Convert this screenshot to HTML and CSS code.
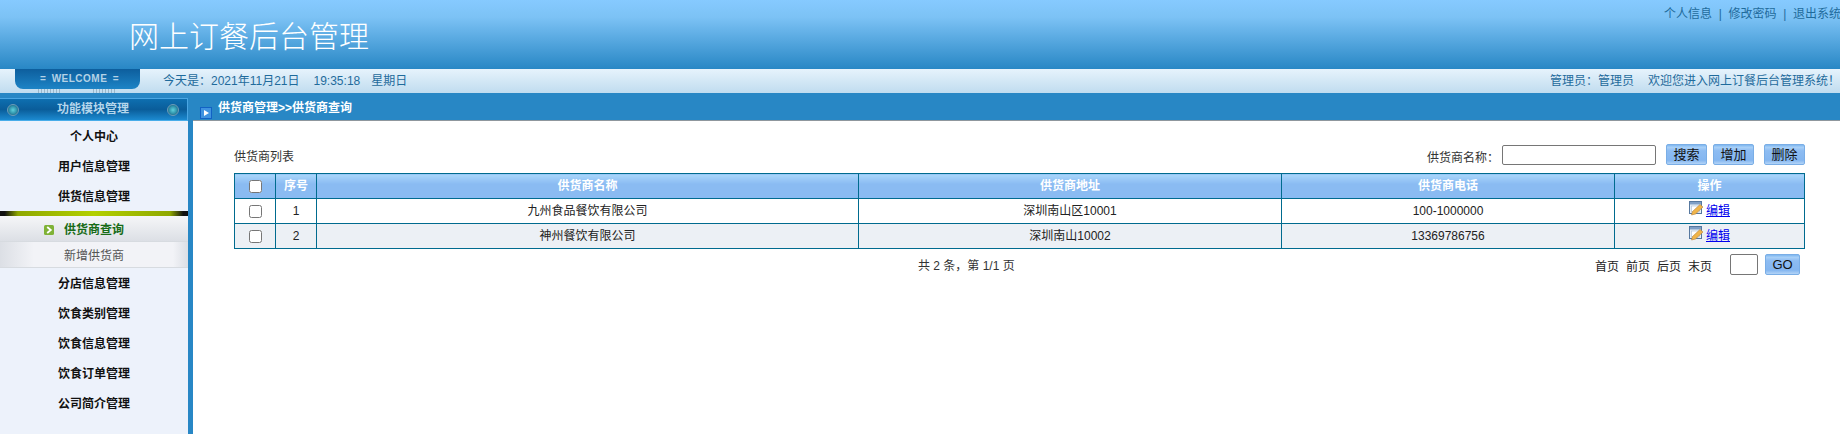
FILE: index.html
```html
<!DOCTYPE html>
<html lang="zh-CN">
<head>
<meta charset="utf-8">
<title>网上订餐后台管理</title>
<link rel="stylesheet" href="styles.css">
</head>
<body>
<header class="top">
  <h1 class="brand">网上订餐后台管理</h1>
  <nav class="top-links"><a>个人信息</a><span class="sep">|</span><a>修改密码</a><span class="sep">|</span><a>退出系统</a></nav>
</header>
<div class="strip">
  <div class="welcome"><span class="welcome-text">= WELCOME =</span>
    <div class="ticks"><i></i><i></i></div>
  </div>
  <div class="today">今天是：2021年11月21日<span class="gap"></span>19:35:18<span class="gap gap-sm"></span>星期日</div>
  <div class="greet">管理员：管理员<span class="gap"></span>欢迎您进入网上订餐后台管理系统！</div>
</div>
<div class="body-row">
  <aside class="side">
    <div class="side-title"><i class="knob"></i><span>功能模块管理</span><i class="knob"></i></div>
    <ul class="menu">
      <li class="menu-item">个人中心</li>
      <li class="menu-item">用户信息管理</li>
      <li class="menu-item">供货信息管理</li>
      <li class="submenu">
        <div class="sub-active"><svg class="arrow" width="10" height="10" viewBox="0 0 10 10"><rect width="10" height="10" rx="1.5" fill="#7fb236"/><path d="M3.2 2 6.8 5 3.2 8" fill="none" stroke="#fff" stroke-width="1.8"/></svg>供货商查询</div>
        <div class="sub-item">新增供货商</div>
      </li>
      <li class="menu-item">分店信息管理</li>
      <li class="menu-item">饮食类别管理</li>
      <li class="menu-item">饮食信息管理</li>
      <li class="menu-item">饮食订单管理</li>
      <li class="menu-item">公司简介管理</li>
    </ul>
  </aside>
  <main class="main">
    <div class="crumb"><svg class="crumb-icon" width="12" height="12" viewBox="0 0 12 12"><rect x=".5" y=".5" width="11" height="11" fill="#3f93e0" stroke="#1262c4"/><path d="M4 3 9 6 4 9Z" fill="#fff"/></svg><span>供货商管理&gt;&gt;供货商查询</span></div>
    <div class="content">
      <div class="toolbar">
        <span class="list-title">供货商列表</span>
        <div class="search">
          <label class="search-label">供货商名称：</label>
          <input class="search-input" type="text">
          <button class="btn btn-search">搜索</button>
          <button class="btn btn-add">增加</button>
          <button class="btn btn-del">删除</button>
        </div>
      </div>
      <table class="grid">
        <colgroup><col class="c1"><col class="c2"><col class="c3"><col class="c4"><col class="c5"><col class="c6"></colgroup>
        <thead><tr><th><input type="checkbox"></th><th>序号</th><th>供货商名称</th><th>供货商地址</th><th>供货商电话</th><th>操作</th></tr></thead>
        <tbody>
          <tr><td><input type="checkbox"></td><td>1</td><td>九州食品餐饮有限公司</td><td>深圳南山区10001</td><td>100-1000000</td>
            <td><span class="op"><svg class="edit-icon" width="15" height="15" viewBox="0 0 15 15"><rect x=".5" y=".5" width="12" height="12" fill="#e8eff7" stroke="#56789f"/><rect x="1" y="1" width="11" height="2.5" fill="#7f9fc6"/><rect x="2.5" y="5" width="8" height="6" fill="#fff" stroke="#a9bdd4" stroke-width=".6"/><path d="M2.5 14 3.5 10.5 11 3.5 14 6 6.5 13Z" fill="#f0b54a" stroke="#b9813a" stroke-width=".6"/></svg><a class="edit">编辑</a></span></td></tr>
          <tr class="alt"><td><input type="checkbox"></td><td>2</td><td>神州餐饮有限公司</td><td>深圳南山10002</td><td>13369786756</td>
            <td><span class="op"><svg class="edit-icon" width="15" height="15" viewBox="0 0 15 15"><rect x=".5" y=".5" width="12" height="12" fill="#e8eff7" stroke="#56789f"/><rect x="1" y="1" width="11" height="2.5" fill="#7f9fc6"/><rect x="2.5" y="5" width="8" height="6" fill="#fff" stroke="#a9bdd4" stroke-width=".6"/><path d="M2.5 14 3.5 10.5 11 3.5 14 6 6.5 13Z" fill="#f0b54a" stroke="#b9813a" stroke-width=".6"/></svg><a class="edit">编辑</a></span></td></tr>
        </tbody>
      </table>
      <div class="pager">
        <span class="count">共 2 条，第 1/1 页</span>
        <div class="pages">
          <a>首页</a><a>前页</a><a>后页</a><a>末页</a>
          <input class="page-input" type="text">
          <button class="btn btn-go">GO</button>
        </div>
      </div>
    </div>
  </main>
</div>
</body>
</html>
```
FILE: styles.css
```css
* { box-sizing: border-box; }
html, body { margin: 0; padding: 0; height: 434px; overflow: hidden; background: #fff; }
body { font: 12px/1.2 "Liberation Sans", "Noto Sans CJK SC", sans-serif; color: #222; }

.top {
  height: 69px;
  display: flex;
  justify-content: space-between;
  background: linear-gradient(#86caff 0%, #7cc2f5 25%, #2887c5 100%);
}
.brand {
  margin: 0;
  padding: 14px 0 0 129px;
  font: 300 30px/40px "Noto Sans CJK SC", sans-serif;
  color: #fff;
}
.top-links {
  padding-top: 6px;
  width: 176px;
  flex: none;
  white-space: nowrap;
  overflow: hidden;
  color: #1f6b9c;
  font-size: 12px;
  line-height: 16px;
}
.sep { margin: 0 6.7px; }

.strip {
  height: 24px;
  display: flex;
  align-items: center;
  background: linear-gradient(#e6f3fc, #c0dcef);
  color: #1f6b9c;
  position: relative;
}
.welcome {
  flex: none;
  margin-left: 15px;
  width: 125px;
  height: 24px;
  align-self: flex-start;
  position: relative;
}
.welcome-text {
  display: block;
  height: 20px;
  border-radius: 0 0 8px 8px;
  background: linear-gradient(#0d5e9d, #1d84c6);
  color: #b4d2e6;
  font: bold 10px/19px "Liberation Sans", sans-serif;
  letter-spacing: .5px;
  text-align: center;
  word-spacing: 2px;
  padding-left: 4px;
}
.ticks { display: flex; gap: 32px; padding-left: 23px; }
.ticks i {
  width: 23px;
  height: 4px;
  background: repeating-linear-gradient(90deg, #9ab6c9 0 1px, transparent 1px 3px);
}
.today { margin-left: 23px; }
.gap { display: inline-block; width: 14px; }
.gap-sm { width: 11px; }
.greet { margin-left: auto; }

.body-row { display: flex; height: 341px; }

.side {
  width: 193px;
  flex: none;
  background: #2887c5;
  border-right: 5px solid #2887c5;
  padding-top: 5px;
  display: flex;
  flex-direction: column;
}
.side-title {
  height: 23px;
  flex: none;
  display: flex;
  align-items: center;
  justify-content: space-between;
  padding: 0 8px 0 7px;
  border: 1px solid #4aa6e3;
  border-left: 0;
  border-bottom-color: #49ade9;
  background: linear-gradient(#0e6fb0 0, #0a5d9a 50%, #1c8ad0 100%);
  color: #b4d6ec;
  font-weight: bold;
  font-size: 12px;
}
.knob {
  width: 12px;
  height: 12px;
  border-radius: 50%;
  background: radial-gradient(circle, #5fd0dc 0, #2d8fa8 55%, #0c3f66 100%);
  border: 1px solid #6d9db8;
}
.menu {
  list-style: none;
  margin: 0;
  padding: 0;
  flex: 1;
  background: #edf2fb;
}
.menu-item {
  height: 30px;
  line-height: 32px;
  text-align: center;
  font-weight: bold;
  color: #111;
}
.submenu {
  height: 57px;
  background: linear-gradient(90deg, #dcdfe5 0, #f2f3f7 18%, #f2f3f7 92%, #dcdfe5 100%);
  border-top: 5px solid;
  border-image: linear-gradient(90deg, #111 0, #111 3%, #8fa800 10%, #b3d000 50%, #8fa800 90%, #111 97%, #111 100%) 1;
}
.sub-active {
  height: 26px;
  line-height: 28px;
  text-align: center;
  font-weight: bold;
  color: #176b17;
  border-bottom: 1px solid #d7dbe0;
  background: linear-gradient(#f5f6f8, #dcdfe5);
}
.arrow { vertical-align: -1px; margin: 0 10px 0 -20px; }
.sub-item {
  height: 26px;
  line-height: 28px;
  text-align: center;
  color: #555;
  border-bottom: 1px solid #d7dbe0;
}

.main { flex: 1; min-width: 0; display: flex; flex-direction: column; }
.crumb {
  height: 28px;
  flex: none;
  background: #2887c5;
  border-bottom: 1px solid #8f979d;
  color: #fff;
  font-weight: bold;
  padding: 7px 0 0 7px;
  display: flex;
  gap: 6px;
  line-height: 16px;
}
.crumb-icon { margin-top: 7px; }
.content { flex: 1; padding: 23px 35px 0 41px; }

.toolbar {
  height: 29px;
  display: flex;
  justify-content: space-between;
}
.list-title { padding-top: 6px; color: #333; }
.search { display: flex; align-items: flex-start; }
.search-label { padding-top: 7px; margin-right: 3px; color: #333; }
.search-input {
  width: 154px;
  height: 20px;
  margin: 1px 10px 0 0;
  border: 1px solid #767676;
  border-radius: 2px;
  background: #fff;
}
.btn {
  width: 41px;
  height: 21px;
  padding: 0;
  border: 1px solid #7aaee6;
  border-radius: 2px;
  background: linear-gradient(#7db6f0 0, #a9d0f7 12%, #8dbcf2 30%, #84b6f0 80%, #b3d4f7 100%);
  font: 13px/19px "Liberation Sans", "Noto Sans CJK SC", sans-serif;
  color: #111;
}
.btn-add { margin-left: 6px; }
.btn-del { margin-left: 10px; }

.grid {
  width: 1570px;
  table-layout: fixed;
  border-collapse: collapse;
  border: 1px solid #006b8f;
}
.c1 { width: 41px; }
.c2 { width: 41px; }
.c3 { width: 542px; }
.c4 { width: 423px; }
.c5 { width: 333px; }
.c6 { width: 190px; }
.grid th, .grid td {
  height: 25px;
  padding: 0;
  text-align: center;
  vertical-align: middle;
  border: 1px solid #006b8f;
  line-height: 16px;
}
.grid th {
  background: linear-gradient(#a9d6fb 0, #8abbf2 40%, #8abbf2 100%);
  color: #fff;
  font-weight: bold;
}
.grid td { color: #222; }
.alt td { background: #ecf0f5; }
.grid input[type="checkbox"] { margin: 0; width: 13px; height: 13px; vertical-align: middle; }
.op { display: inline-flex; align-items: flex-start; gap: 2px; }
.edit-icon { flex: none; margin-top: -2px; }
.edit { color: #0000ee; text-decoration: underline; }

.pager {
  display: flex;
  justify-content: space-between;
  padding: 4px 5px 0 684px;
}
.count { padding-top: 6px; color: #333; }
.pages { display: flex; align-items: flex-start; }
.pages a { margin-right: 7px; padding-top: 7px; color: #222; }
.page-input {
  width: 28px;
  height: 21px;
  margin: 1px 7px 0 11px;
  border: 1px solid #767676;
  border-radius: 2px;
  background: #fff;
}
.btn-go { width: 35px; margin-top: 1px; }
```
